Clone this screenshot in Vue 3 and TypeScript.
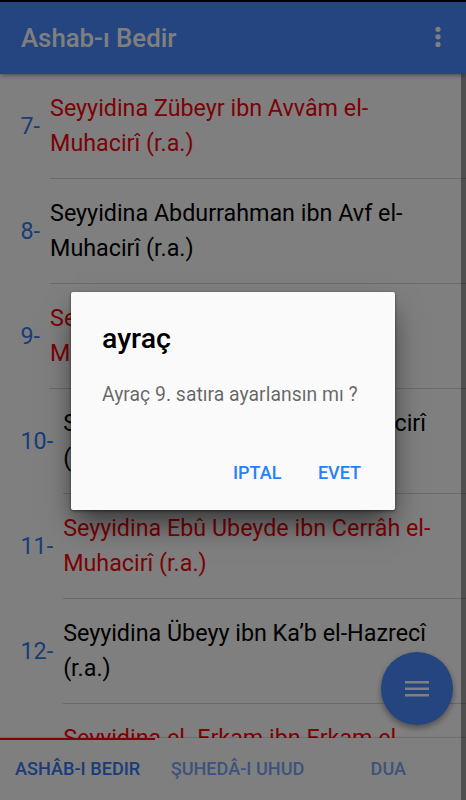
<script setup lang="ts">
interface Entry {
  no: number
  lines: string[]
  red: boolean
}

const entries: Entry[] = [
  { no: 7, lines: ['Seyyidina Zübeyr ibn Avvâm el-', 'Muhacirî (r.a.)'], red: true },
  { no: 8, lines: ['Seyyidina Abdurrahman ibn Avf el-', 'Muhacirî (r.a.)'], red: false },
  { no: 9, lines: ["Seyyidina Sa'd ibn Ebî Vakkas el-", 'Muhacirî (r.a.)'], red: true },
  { no: 10, lines: ['Seyyidina Saîd ibn Zeyd el-Muhacirî', '(r.a.)'], red: false },
  { no: 11, lines: ['Seyyidina Ebû Ubeyde ibn Cerrâh el-', 'Muhacirî (r.a.)'], red: true },
  { no: 12, lines: ['Seyyidina Übeyy ibn Ka’b el-Hazrecî', '(r.a.)'], red: false },
  { no: 13, lines: ['Seyyidina el- Erkam ibn Erkam el-'], red: true },
]

const tabs: string[] = ['ASHÂB-I BEDIR', 'ŞUHEDÂ-I UHUD', 'DUA']
</script>

<template>
  <div class="screen">
    <header class="bar">
      <h1>Ashab-ı Bedir</h1>
      <svg class="more" width="8" height="24" viewBox="0 0 8 24">
        <circle cx="4" cy="3.3" r="2.6" /><circle cx="4" cy="10.8" r="2.6" /><circle cx="4" cy="18.4" r="2.6" />
      </svg>
    </header>
    <main class="list">
      <div v-for="e in entries" :key="e.no" class="item">
        <span class="no">{{ e.no }}-</span>
        <div class="body" :class="{ red: e.red }">
          <div v-for="(line, i) in e.lines" :key="i">{{ line }}</div>
        </div>
      </div>
    </main>
    <nav class="tabs">
      <div v-for="(t, i) in tabs" :key="t" class="tab" :class="{ active: i === 0 }">{{ t }}</div>
    </nav>
    <div class="scroll"></div>
    <button class="fab" type="button">
      <svg width="24" height="18" viewBox="0 0 24 18">
        <path d="M0 1h24v2.6H0zM0 7.5h24v2.6H0zM0 14h24v2.6H0z" />
      </svg>
    </button>
    <div class="backdrop">
      <section class="dialog">
        <h2>ayraç</h2>
        <p>Ayraç 9. satıra ayarlansın mı ?</p>
        <div class="actions">
          <button type="button">IPTAL</button>
          <button type="button">EVET</button>
        </div>
      </section>
    </div>
  </div>
</template>

<style>
body { background: #000; }
</style>

<style scoped>
.screen {
  position: relative;
  box-sizing: border-box;
  width: 466px;
  height: 800px;
  padding-top: 2px;
  display: flex;
  flex-direction: column;
  overflow: hidden;
  background: #000;
  font-family: Roboto, sans-serif;
}
.bar {
  flex: none;
  height: 72px;
  box-sizing: border-box;
  padding: 0 24.5px 0 21px;
  display: flex;
  align-items: center;
  justify-content: space-between;
  background: #488aff;
  color: #fff;
  box-shadow: 0 1px 5px rgba(0, 0, 0, 0.45);
  z-index: 1;
}
.bar h1 {
  margin: 0;
  font-size: 25.8px;
  font-weight: 500;
  line-height: 72px;
}
.more { fill: #fff; }
.list {
  flex: 1;
  min-height: 0;
  overflow: hidden;
  background: #fff;
}
.item {
  display: flex;
  height: 105px;
  padding-left: 20.5px;
  font-size: 23.3px;
}
.no {
  line-height: 104px;
  margin-right: 10px;
  color: #3478ee;
}
.body {
  flex: 1;
  box-sizing: border-box;
  padding-top: 17px;
  border-bottom: 1px solid #d4d4d4;
  line-height: 35px;
  white-space: nowrap;
  color: #000;
}
.body.red { color: #f8040c; }
.tabs {
  flex: none;
  height: 62px;
  display: grid;
  grid-template-columns: repeat(3, 155.33px);
  background: #fff;
  box-shadow: 0 -1px 1px rgba(0, 0, 0, 0.12);
  z-index: 1;
}
.tab {
  box-sizing: border-box;
  border-top: 2px solid transparent;
  text-align: center;
  line-height: 57px;
  font-size: 18.1px;
  font-weight: 500;
  color: #7aa6f8;
}
.tab:nth-child(2) { padding-left: 9px; }
.tab.active {
  border-color: #f8040c;
  color: #3478ee;
}
.scroll {
  position: absolute;
  z-index: 2;
  top: 74px;
  right: 0;
  bottom: 0;
  width: 5px;
  background: rgba(0, 0, 0, 0.38);
}
.fab {
  position: absolute;
  z-index: 3;
  left: 380.5px;
  top: 652px;
  width: 72.5px;
  height: 73px;
  padding: 0;
  border: 0;
  border-radius: 50%;
  display: flex;
  align-items: center;
  justify-content: center;
  background: #488aff;
  box-shadow: 0 3px 6px rgba(0, 0, 0, 0.4);
}
.fab svg { fill: #fff; }
.backdrop {
  position: absolute;
  z-index: 4;
  inset: 0;
  display: flex;
  align-items: center;
  justify-content: center;
  background: rgba(0, 0, 0, 0.5);
}
.dialog {
  box-sizing: border-box;
  width: 324px;
  height: 218px;
  margin-top: 2px;
  padding: 31px 34px 0 31px;
  border-radius: 2px;
  background: #fafafa;
  box-shadow: 0 16px 28px -4px rgba(0, 0, 0, 0.6), 0 1px 3px rgba(0, 0, 0, 0.5);
}
.dialog h2 {
  margin: 0;
  font-size: 28.5px;
  line-height: 32px;
  font-weight: 500;
  color: #000;
}
.dialog p {
  margin: 28px 0 0;
  font-size: 19.4px;
  line-height: 24px;
  white-space: nowrap;
  color: rgba(0, 0, 0, 0.6);
}
.actions {
  margin-top: 54px;
  display: flex;
  justify-content: flex-end;
  gap: 36.5px;
}
.actions button {
  padding: 0;
  border: 0;
  background: none;
  font: 500 18px/24px Roboto, sans-serif;
  color: #2580ff;
}
</style>
